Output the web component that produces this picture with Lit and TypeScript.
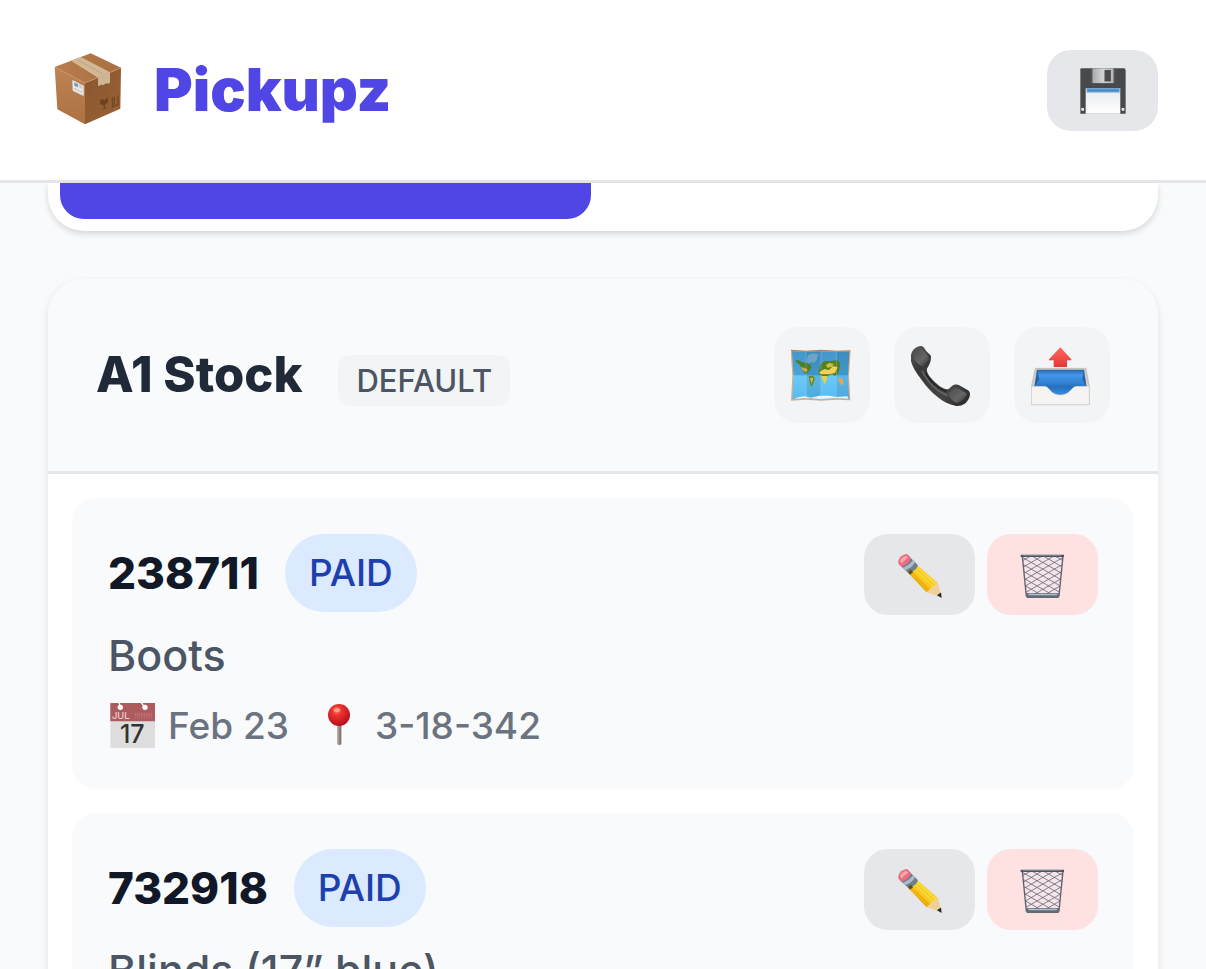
import { LitElement, html, svg, css } from "lit";
import { customElement, property } from "lit/decorators.js";

const packageIcon = html`<svg class="package" viewBox="33 38 222 222" aria-hidden="true">
  <defs>
    <linearGradient id="pk-l" x1="0" y1="0" x2="0" y2="1"><stop offset="0" stop-color="#bd8353" /><stop offset="1" stop-color="#ad7142" /></linearGradient>
    <linearGradient id="pk-r" x1="0" y1="0" x2="1" y2="1"><stop offset="0" stop-color="#8a562d" /><stop offset="1" stop-color="#9a6236" /></linearGradient>
    <linearGradient id="pk-t" x1="0" y1="0" x2="1" y2="0"><stop offset="0" stop-color="#b97d4c" /><stop offset="1" stop-color="#a86f40" /></linearGradient>
  </defs>
  <path d="M44 80 152 39 243 82 135 128Z" fill="url(#pk-t)" />
  <path d="M44 80 135 128V252L52 207Z" fill="url(#pk-l)" />
  <path d="M135 128 243 82 241 205 135 252Z" fill="url(#pk-r)" />
  <path d="M45 81 135 128 242 83" fill="none" stroke="#c89467" stroke-width="2.5" />
  <path d="M93 61 122 50 210 96 174 112Z" fill="#d3b896" />
  <path d="M174 112 210 96V127L204 130 198 129 191 134 184 133 174 138Z" fill="#cdb695" />
  <path d="M113 59 187 100" stroke="#bfa27c" stroke-width="3" />
  <path d="M97 119 131 136V167L98 151Z" fill="#e5e7e8" />
  <path d="M103 126 114 132V141L103 136Z" fill="#7897ae" />
  <path d="M117 134 127 139M117 139 127 144M102 144 126 156" stroke="#a2a8ab" stroke-width="2" />
  <path d="M180 180 190 175 192 181 203 170 204 185 195 193V204L203 202 184 210 191 205V195L181 192Z" fill="#6d421f" />
  <path d="M217 171V200M223 169V197M234 165V193M215 201 237 191" stroke="#6d421f" stroke-width="3" fill="none" />
</svg>`;

const floppyIcon = html`<svg class="glyph" viewBox="146 80 143 143" aria-hidden="true">
  <defs>
    <linearGradient id="fl-s" x1="0" y1="0" x2="1" y2="0"><stop offset="0" stop-color="#a9abae" /><stop offset=".5" stop-color="#d2d3d5" /><stop offset="1" stop-color="#b4b6b8" /></linearGradient>
    <linearGradient id="fl-p" x1="0" y1="0" x2="0" y2="1"><stop offset="0" stop-color="#e6e8ec" /><stop offset="1" stop-color="#ffffff" /></linearGradient>
  </defs>
  <path d="M152 87H282L285 92V222H150V90Z" fill="#48494b" />
  <path d="M186 87H249V131H186Z" fill="url(#fl-s)" />
  <path d="M222 92H241V126H222Z" fill="#4b4b4d" />
  <path d="M253 88V130M183 88V130" stroke="#606164" stroke-width="2" />
  <path d="M166 146H269V222H166Z" fill="url(#fl-p)" />
  <path d="M169 146H267V159H169Z" fill="#5b9bd3" />
  <path d="M172 153H264" stroke="#397cb7" stroke-width="2" />
  <path d="M153 205H161V213H153ZM273 205H281V213H273Z" fill="#e9eaec" />
</svg>`;

const mapIcon = html`<svg class="wide" viewBox="92 103 186 186" aria-hidden="true">
  <defs>
    <linearGradient id="mp" x1="0" y1="0" x2="0" y2="1"><stop offset="0" stop-color="#4497c9" /><stop offset=".5" stop-color="#4aa3d8" /><stop offset=".51" stop-color="#6ac9f8" /><stop offset="1" stop-color="#58bcf1" /></linearGradient>
  </defs>
  <path d="M91 120 137 123 182 120 228 123 271 122 266 198 270 272 227 270 182 273 138 270 92 273 96 198Z" fill="#d1ad8b" />
  <path d="M95 125 137 127 182 125 228 127 267 126 263 198 266 268 227 265 182 268 138 265 96 268 100 198Z" fill="url(#mp)" />
  <path d="M137 127 182 125V268L138 265ZM228 127 267 126 263 198 266 268 227 265Z" fill="#175684" opacity=".17" />
  <path d="M143 137 156 131 173 134 169 151 160 160 151 156 147 165 139 153Z" fill="#98b7ca" opacity=".55" />
  <path d="M104 154 112 150 124 157 137 160 149 163 154 172 149 182 143 187 138 193 131 190 126 178 118 165Z" fill="#4f7e27" />
  <path d="M122 172 136 176 143 180 136 187 128 183Z" fill="#d0a93c" />
  <path d="M145 200 157 198 164 206 159 219 155 231 150 225Z" fill="#5f8927" />
  <path d="M149 205 159 204 154 222Z" fill="#e0c13d" />
  <path d="M175 184 181 164 192 154 211 154 231 151 240 161 238 174 234 190 224 199 214 192 204 199 198 202 187 198 176 196Z" fill="#547f22" />
  <path d="M177 188 192 178 206 181 218 169 232 173 224 190 206 194 192 194 179 193Z" fill="#f1d052" />
  <path d="M184 199 201 199 198 213 194 223 189 216Z" fill="#e9d23e" />
  <path d="M197 166 206 160 221 163 214 172 201 174Z" fill="#c9be48" />
  <path d="M232 208 243 205 250 214 246 229 239 220Z" fill="#e5a955" />
  <path d="M101 267 113 263 133 260 151 264 178 258 206 258 228 262 261 260 264 267 227 265 182 268 138 265Z" fill="#e9f7fd" />
  <path d="M137 125V268M182 122V271M228 125V267" stroke="#b9d8e3" stroke-width="1.5" opacity=".6" />
  <path d="M92 122 137 125 182 122 228 125 269 124" stroke="#9d7b68" stroke-width="2.5" fill="none" />
</svg>`;

const phoneIcon = html`<svg class="wide" viewBox="454 101 185 185" aria-hidden="true">
  <defs>
    <linearGradient id="ph" x1="0" y1="0" x2="1" y2="1"><stop offset="0" stop-color="#5b5b5b" /><stop offset=".25" stop-color="#383838" /><stop offset=".7" stop-color="#444" /><stop offset="1" stop-color="#262626" /></linearGradient>
    <linearGradient id="ph2" x1="0" y1="0" x2="1" y2="1"><stop offset="0" stop-color="#4a4a4a" /><stop offset=".6" stop-color="#666" /><stop offset="1" stop-color="#303030" /></linearGradient>
  </defs>
  <path d="M453 143C453 122 467 107 484 107C493 108 495 116 499 122L513 135C516 152 508 165 502 174C500 182 503 190 515 204C533 224 550 236 562 236C572 235 574 225 585 222C591 221 596 223 602 226L624 239C632 244 631 254 627 263C619 281 603 288 586 285C551 279 514 248 487 210C467 183 454 164 453 143Z" fill="url(#ph)" />
  <path d="M460 139C462 123 473 113 484 112C488 116 507 136 508 143C506 153 494 163 488 169C480 163 463 154 460 139Z" fill="url(#ph2)" />
  <path d="M565 249C571 243 577 235 586 231C597 234 613 243 621 249C617 264 603 276 589 277C576 271 568 260 565 249Z" fill="url(#ph2)" />
  <path d="M487 181C503 213 531 242 563 255" stroke="#777" stroke-width="5" fill="none" opacity=".65" />
  <path d="M497 187C509 213 536 235 560 243" stroke="#202020" stroke-width="4" fill="none" />
</svg>`;

const outboxIcon = html`<svg class="wide" viewBox="94 101 186 186" aria-hidden="true">
  <defs>
    <linearGradient id="ob-a" x1="0" y1="0" x2="0" y2="1"><stop offset="0" stop-color="#ff6860" /><stop offset="1" stop-color="#e33935" /></linearGradient>
    <linearGradient id="ob-b" x1="0" y1="0" x2="0" y2="1"><stop offset="0" stop-color="#2866aa" /><stop offset=".2" stop-color="#4397ed" /><stop offset=".5" stop-color="#3380d0" /><stop offset=".62" stop-color="#256fba" /><stop offset="1" stop-color="#3f95ee" /></linearGradient>
  </defs>
  <path d="M182 111 215 147V150H202V170H162V150H148V147Z" fill="url(#ob-a)" />
  <path d="M107 174H259L269 229V283H95V229Z" fill="#d2cdc7" stroke="#aaa69f" stroke-width="1.5" />
  <path d="M112 178H253L260 228 215 260H150L104 228Z" fill="url(#ob-b)" />
  <path d="M112 178 119 207 105 228ZM253 178 248 207 260 228Z" fill="#194e83" opacity=".65" />
  <path d="M95 228H133C151 228 151 254 182 254S214 228 232 228H269V283H95Z" fill="#f5f4f2" stroke="#c9c4bc" stroke-width="1.5" />
</svg>`;

const calendarIcon = html`<svg class="glyph" viewBox="27 36 144 144" aria-hidden="true">
  <path d="M34 39H168V174H34Z" fill="#dedede" />
  <path d="M34 39H168V94H34Z" fill="#ae5b5e" />
  <path d="M110 67V86M116 67V86M122 67V86M129 67V86M136 67V86M143 67V86M150 67V86M157 67V86M108 74H160" stroke="#c98183" stroke-width="1.5" />
  <path d="M60 38 64 51M127 38 137 52" stroke="#fff" stroke-width="4" />
  <circle cx="64" cy="52" r="8" fill="#fff" />
  <circle cx="138" cy="52" r="8" fill="#fff" />
  <text x="39" y="86" font-size="28" fill="#eed4d4">JUL</text>
  <text x="100" y="159" font-size="75" font-weight="500" text-anchor="middle" fill="#333">17</text>
</svg>`;

const pinIcon = html`<svg class="glyph" viewBox="645 36 144 144" aria-hidden="true">
  <defs>
    <radialGradient id="pn" cx=".4" cy=".3" r=".7"><stop offset="0" stop-color="#ff8a78" /><stop offset=".3" stop-color="#ec3433" /><stop offset="1" stop-color="#b90e19" /></radialGradient>
    <linearGradient id="pn-s" x1="0" x2="1"><stop offset="0" stop-color="#c2b6b1" /><stop offset="1" stop-color="#75635d" /></linearGradient>
  </defs>
  <path d="M711 100H724V163L718 166 711 163Z" fill="url(#pn-s)" />
  <circle cx="717" cy="75" r="33" fill="url(#pn)" />
  <ellipse cx="711" cy="60" rx="10" ry="6" fill="#ffb4a4" opacity=".6" />
</svg>`;

const pencilIcon = html`<svg class="glyph" viewBox="137 92 143 143" aria-hidden="true">
  <defs>
    <linearGradient id="pc" x1="0" y1="1" x2="1" y2="0"><stop offset=".2" stop-color="#c88b08" /><stop offset=".4" stop-color="#f5b90d" /><stop offset=".6" stop-color="#ffe03b" /><stop offset=".85" stop-color="#d99b0b" /></linearGradient>
  </defs>
  <path d="M202 135 262 187 228 215 172 156Z" fill="url(#pc)" />
  <path d="M179 151 236 208M192 139 253 195" stroke="#d18c0a" stroke-width="2" opacity=".65" />
  <path d="M228 215 240 207 242 200 253 198 255 190 262 187 273 230Z" fill="#f0cf98" />
  <path d="M259 224 271 216 273 232Z" fill="#292a31" />
  <path d="M181 113 202 134C202 143 187 157 173 157L151 137Z" fill="#6f7e8d" />
  <path d="M157 142C170 138 182 128 187 119L193 125C190 136 177 145 164 149Z" fill="#afbdca" />
  <path d="M144 124C144 112 158 101 170 101L181 111C180 124 165 137 152 138L144 130Z" fill="#e86d80" />
  <path d="M149 123C151 114 160 107 168 106L174 112C168 115 158 122 155 130Z" fill="#f9a5aa" />
  <path d="M173 156 180 147 188 155 179 163Z" fill="#53551d" />
</svg>`;

const meshLines = [-120, -100, -80, -60, -40, -20, 0, 20, 40, 60, 80, 100, 120];
const trashIcon = html`<svg class="glyph" viewBox="508 92 143 143" aria-hidden="true">
  <defs><clipPath id="tr"><path d="M518 108H639L627 226H530Z" /></clipPath></defs>
  <path d="M518 108H639L627 226H530Z" fill="#f1e6ed" opacity=".7" />
  <g clip-path="url(#tr)" stroke="#6c6c78" stroke-width="2.5" fill="none">
    ${meshLines.map((o) => svg`<path d=${`M510 ${126 + o}L648 ${206 + o}M648 ${126 + o}L510 ${206 + o}`} />`)}
  </g>
  <path d="M518 108 530 228M639 108 627 228" stroke="#60636e" stroke-width="4" />
  <path d="M530 218H627L626 232H531Z" fill="#626973" />
  <path d="M536 222H621" stroke="#a8c0ce" stroke-width="4" />
  <path d="M513 103H642V110H513Z" fill="#4c535e" />
  <path d="M520 105H633" stroke="#94a4b2" stroke-width="2" />
</svg>`;

const shared = css`
  * { box-sizing: border-box; }
  h1, h2, h3, p { margin: 0; }
  svg { display: block; flex: none; }
  button { display: flex; align-items: center; justify-content: center; border: 0; padding: 0; cursor: pointer; font: inherit; }
  .glyph { width: 48px; height: 48px; }
  .action { width: 111px; height: 81px; border-radius: 24px; background: #e5e7eb; }
`;

@customElement("pickup-item")
export class PickupItem extends LitElement {
  @property() number = "";
  @property() description = "";
  @property() date = "";
  @property() location = "";

  static styles = [
    shared,
    css`
      :host { display: flex; align-items: flex-start; justify-content: space-between; gap: 24px; padding: 36px; border-radius: 24px; background: #f9fafb; }
      .details { display: flex; flex-direction: column; gap: 12px; min-width: 0; }
      .top { display: flex; align-items: center; gap: 26px; }
      .number { font-size: 44px; line-height: 63px; font-weight: 800; color: #111827; }
      .status { padding: 12px 24px; border-radius: 39px; background: #dbeafe; color: #1e40af; font-size: 37px; line-height: 54px; font-weight: 500; }
      .description { font-size: 43px; line-height: 63px; font-weight: 500; color: #4b5563; }
      .meta { display: flex; gap: 26px; font-size: 37px; line-height: 54px; font-weight: 500; color: #6b7280; }
      .fact { display: flex; align-items: center; gap: 12px; }
      .actions { display: flex; gap: 12px; }
      .danger { background: #fee2e2; }
    `,
  ];

  render() {
    return html`
      <div class="details">
        <div class="top"><h3 class="number">${this.number}</h3><span class="status">PAID</span></div>
        <p class="description">${this.description}</p>
        <div class="meta">
          <span class="fact">${calendarIcon}${this.date}</span>
          <span class="fact">${pinIcon}${this.location}</span>
        </div>
      </div>
      <div class="actions">
        <button class="action" aria-label="Edit">${pencilIcon}</button>
        <button class="action danger" aria-label="Delete">${trashIcon}</button>
      </div>
    `;
  }
}

@customElement("app-root")
export class AppRoot extends LitElement {
  static styles = [
    shared,
    css`
      :host { display: block; height: 100vh; overflow: hidden; background: #f9fafb; font-family: Inter, "Liberation Sans", sans-serif; }
      .bar { display: flex; align-items: center; justify-content: space-between; padding: 45px 48px; background: #fff; border-bottom: 3px solid #e5e7eb; }
      .brand { display: flex; align-items: center; gap: 26px; color: #4f46e5; font-size: 59px; line-height: 90px; font-weight: 900; }
      .package { width: 80px; height: 74px; }
      .page { display: flex; flex-direction: column; gap: 48px; padding: 0 48px; }
      .tabs { display: grid; grid-template-columns: 1fr 1fr; gap: 24px; padding: 0 12px 12px; background: #fff; border-radius: 0 0 36px 36px; box-shadow: 0 3px 6px rgba(0, 0, 0, 0.14); }
      .tab { height: 36px; border-radius: 0 0 24px 24px; background: #fff; }
      .tab.active { background: #4f46e5; }
      .store { overflow: hidden; background: #fff; border-radius: 36px; box-shadow: 0 3px 9px rgba(0, 0, 0, 0.1); }
      .store-head { display: flex; align-items: center; justify-content: space-between; padding: 48px; background: #f9fafb; border-bottom: 3px solid #e5e7eb; }
      .title { display: flex; align-items: baseline; gap: 36px; }
      .name { font-size: 49px; line-height: 72px; font-weight: 800; color: #1f2937; }
      .tag { padding: 3px 18px; border-radius: 12px; background: #f3f4f6; color: #4b5563; font-size: 31px; line-height: 45px; font-weight: 500; }
      .tools { display: flex; gap: 24px; }
      .tool { width: 96px; height: 96px; border-radius: 24px; background: #f3f4f6; }
      .wide { width: 62px; height: 62px; }
      .items { display: flex; flex-direction: column; gap: 24px; padding: 24px; }
    `,
  ];

  render() {
    return html`
      <header class="bar">
        <h1 class="brand">${packageIcon}<span>Pickupz</span></h1>
        <button class="action" aria-label="Save">${floppyIcon}</button>
      </header>
      <main class="page">
        <nav class="tabs">
          <button class="tab active" aria-label="Active pickups"></button>
          <button class="tab" aria-label="Completed pickups"></button>
        </nav>
        <section class="store">
          <div class="store-head">
            <div class="title"><h2 class="name">A1 Stock</h2><span class="tag">DEFAULT</span></div>
            <div class="tools">
              <button class="tool" aria-label="Map">${mapIcon}</button>
              <button class="tool" aria-label="Call">${phoneIcon}</button>
              <button class="tool" aria-label="Share">${outboxIcon}</button>
            </div>
          </div>
          <div class="items">
            <pickup-item number="238711" description="Boots" date="Feb 23" location="3-18-342"></pickup-item>
            <pickup-item number="732918" description="Blinds (17” blue)" date="Feb 23" location="3-18-342"></pickup-item>
          </div>
        </section>
      </main>
    `;
  }
}
